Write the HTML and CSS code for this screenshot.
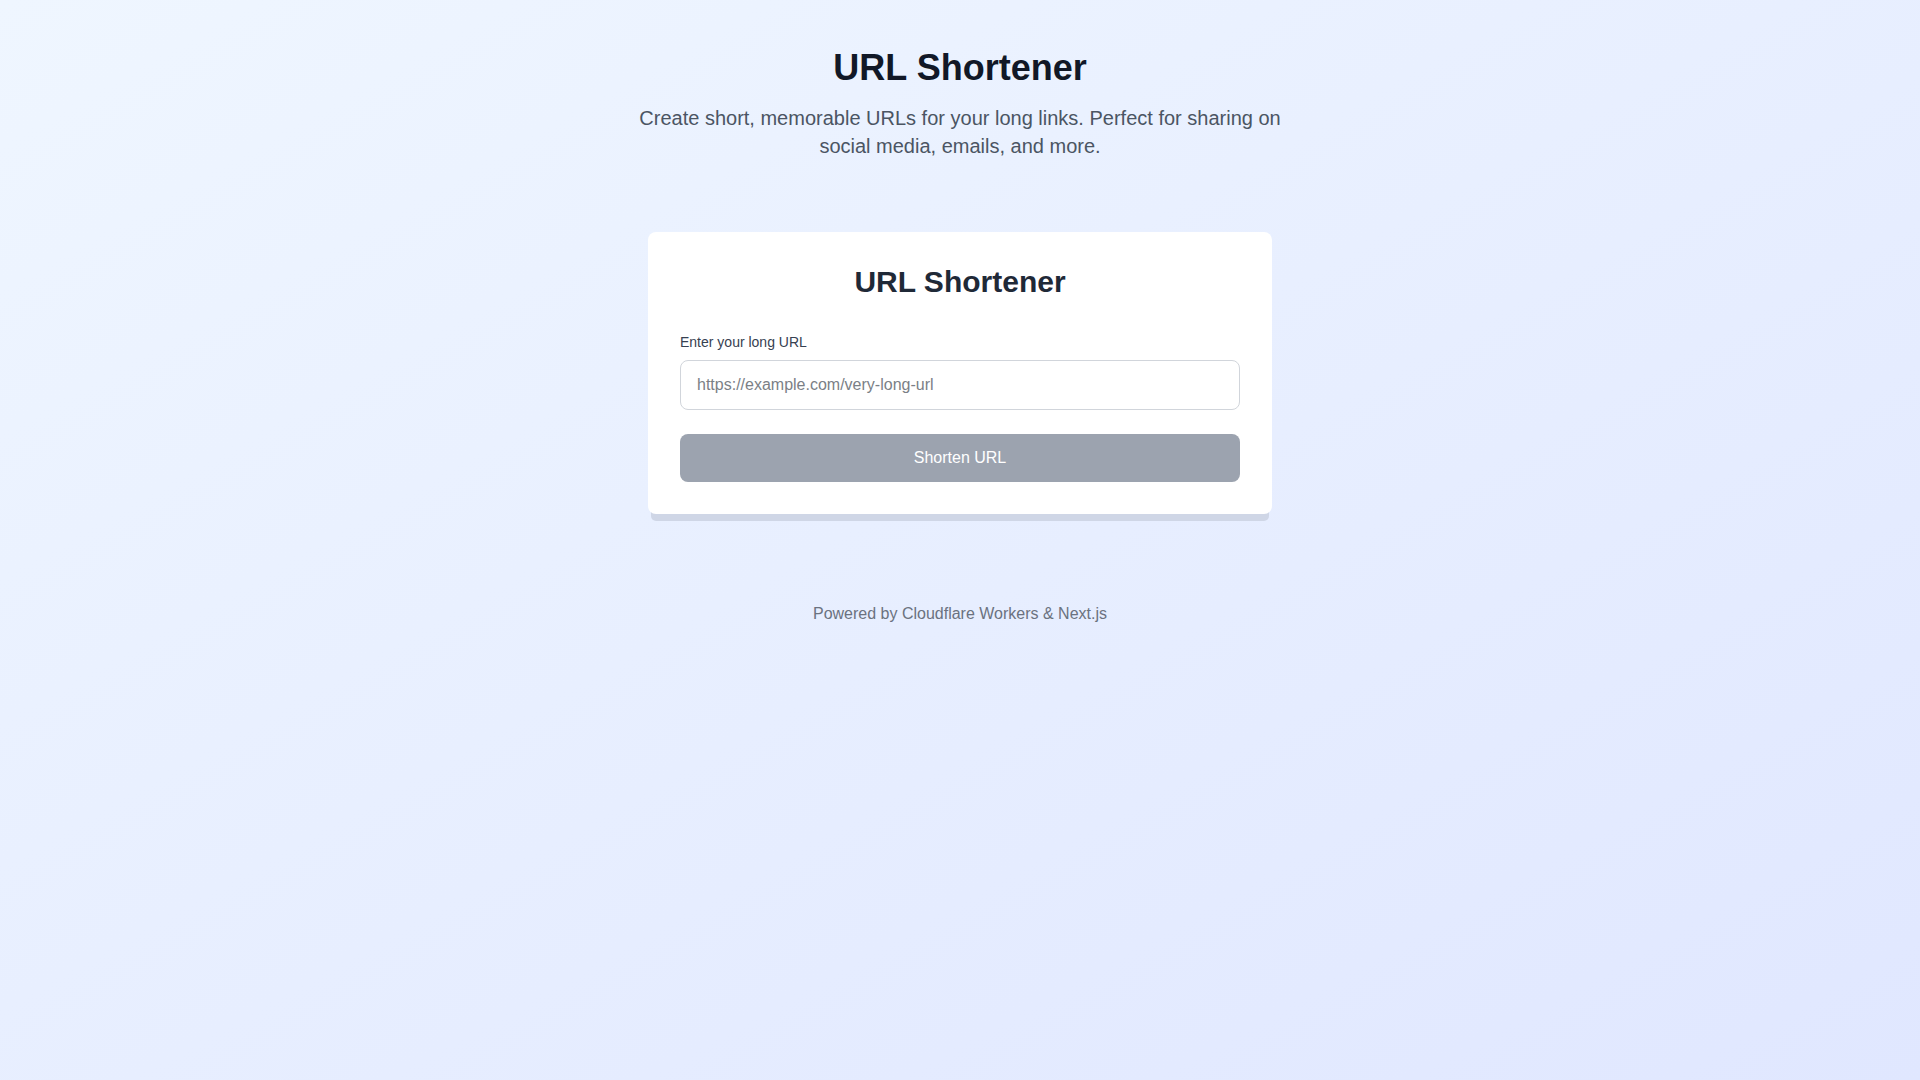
FILE: index.html
```html
<!DOCTYPE html>
<html lang="en">
<head>
    <meta charset="UTF-8">
    <meta name="viewport" content="width=device-width, initial-scale=1.0">
    <title>URL Shortener</title>
    <link rel="stylesheet" href="styles.css">
</head>
<body>
    <main class="page">
        <!-- Header -->
        <header class="hero">
            <h1>URL Shortener</h1>
            <p>Create short, memorable URLs for your long links. Perfect for sharing on social media, emails, and more.</p>
        </header>

        <!-- Form card -->
        <div class="card">
            <h2>URL Shortener</h2>
            <form class="shorten-form" onsubmit="return false;">
                <label for="longUrl">Enter your long URL</label>
                <input type="url" id="longUrl" placeholder="https://example.com/very-long-url">
                <button type="submit" disabled>Shorten URL</button>
            </form>
        </div>

        <!-- Footer -->
        <footer class="footer">Powered by Cloudflare Workers &amp; Next.js</footer>
    </main>
</body>
</html>
```

FILE: styles.css
```css
html, body {
    height: 100%;
}
body {
    margin: 0;
    font-family: 'Liberation Sans', Arial, Helvetica, sans-serif;
    background: linear-gradient(to bottom right, #eff6ff, #e0e7ff);
    color: #111827;
}
.page {
    display: flex;
    flex-direction: column;
    align-items: center;
    padding-top: 48px;
}
.hero {
    text-align: center;
    max-width: 672px;
}
.hero h1 {
    margin: 0 0 16px 0;
    font-size: 36px;
    line-height: 40px;
    font-weight: 700;
    color: #111827; /* gray-900 */
}
.hero p {
    margin: 0;
    font-size: 20px;
    line-height: 28px;
    color: #4b5563; /* gray-600 */
}
.card {
    box-sizing: border-box;
    width: 624px;
    margin-top: 72px;
    padding: 32px;
    background-color: #ffffff;
    border-radius: 8px;
    box-shadow: 0 10px 0 -3px #cfd6e6;
}
.card h2 {
    margin: 0 0 32px 0;
    text-align: center;
    font-size: 30px;
    line-height: 36px;
    font-weight: 700;
    color: #1f2937; /* gray-800 */
}
.shorten-form {
    display: flex;
    flex-direction: column;
}
.shorten-form label {
    font-size: 14px;
    line-height: 20px;
    color: #374151; /* gray-700 */
    margin-bottom: 8px;
}
.shorten-form input {
    box-sizing: border-box;
    width: 100%;
    height: 50px;
    padding: 12px 16px;
    border: 1px solid #d1d5db;
    border-radius: 8px;
    font-family: inherit;
    font-size: 16px;
    line-height: 24px;
    color: #111827;
    background: #ffffff;
    outline: none;
}
.shorten-form input::placeholder {
    color: #7b7f86;
}
.shorten-form button {
    margin-top: 24px;
    height: 48px;
    border: none;
    border-radius: 8px;
    background-color: #9ca3af; /* gray-400, disabled */
    color: #ffffff;
    font-family: inherit;
    font-size: 16px;
    line-height: 24px;
    cursor: not-allowed;
}
.footer {
    margin-top: 88px;
    font-size: 16px;
    line-height: 24px;
    color: #6b7280; /* gray-500 */
}
```
